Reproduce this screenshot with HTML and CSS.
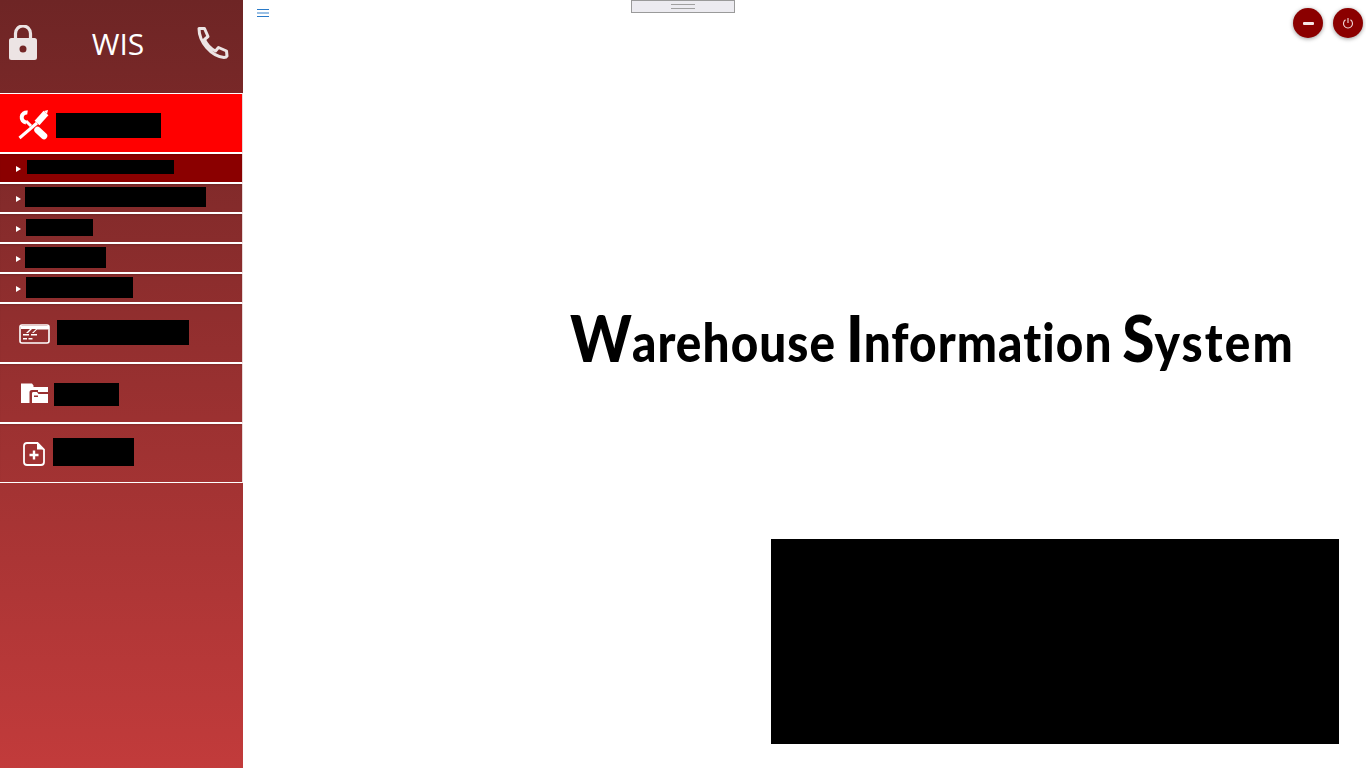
FILE: index.html
```html
<!DOCTYPE html>
<html lang="en">
<head>
    <meta charset="UTF-8">
    <meta name="viewport" content="width=device-width, initial-scale=1.0">
    <title>WIS</title>
    <link rel="stylesheet" href="styles.css">
</head>
<body>
    <aside class="sidebar">
        <header class="side-header">
            <svg class="head-icon" width="28" height="35" viewBox="0 0 28 35"><path d="M6.500 15V8.500a7.500 7.500 0 0 1 15 0V15" fill="none" stroke="#ece4e4" stroke-width="3.200"/><path fill-rule="evenodd" fill="#ece4e4" d="M2.500 13h23a2.500 2.500 0 0 1 2.500 2.500v17a2.500 2.500 0 0 1-2.500 2.500h-23A2.500 2.500 0 0 1 0 32.500v-17A2.500 2.500 0 0 1 2.500 13zM14 20.500a3.500 3.500 0 1 0 0 7 3.500 3.500 0 0 0 0-7z"/></svg>
            <span class="brand">WIS</span>
            <svg class="head-icon" width="32" height="32" viewBox="0 0 32 32"><path d="M2 1.500h5.500l3.500 8-3.500 3c2 4.500 6 9 11 11.500l3-3.500 8 3.500 .5 5c-.5 1-1.500 1.500-3 1.500C14 29 2 15 2 1.500z" fill="none" stroke="#ece4e4" stroke-width="3" stroke-linejoin="round"/></svg>
        </header>
        <nav class="menu">
            <a class="item item-active">
                <svg class="item-icon item-icon-tools" width="32" height="32" viewBox="0 0 32 32">
                    <path d="M29 4L20 14" stroke="#fff" stroke-width="6.500"/>
                    <path d="M31 1l-4 1 3 3z" fill="#fff"/>
                    <path d="M20 14L2.500 29" stroke="#fff" stroke-width="3"/>
                    <path d="M10.500 3.500A5 5 0 1 0 9 13.500" fill="none" stroke="#fff" stroke-width="4"/>
                    <path d="M9 12l5 5" stroke="#fff" stroke-width="3"/>
                    <path d="M20.500 21L27 27" stroke="#fff" stroke-width="6.500" stroke-linecap="round"/>
                </svg>
                <span class="redact redact-main" style="width:105px;height:25px"></span>
            </a>
            <a class="sub sub-active"><i class="arrow"></i><span class="redact" style="width:147px;height:14px;margin-left:6px"></span></a>
            <a class="sub"><i class="arrow"></i><span class="redact" style="width:181px;height:20px;margin-left:4px"></span></a>
            <a class="sub"><i class="arrow"></i><span class="redact" style="width:67px;height:17px;margin-left:5px"></span></a>
            <a class="sub"><i class="arrow"></i><span class="redact" style="width:81px;height:21px;margin-left:4px"></span></a>
            <a class="sub"><i class="arrow"></i><span class="redact" style="width:107px;height:21px;margin-left:5px"></span></a>
            <a class="item">
                <svg class="item-icon item-icon-card" width="32" height="20" viewBox="0 0 32 20"><rect x="1" y="1" width="29" height="18" rx="2" fill="none" stroke="#fff" stroke-width="1.600"/><path fill="#fff" d="M2 2h28v3H2zM7 9l4-4h2l-4 4zM13 9l4-4h12v.5H18l-3.500 3.500zM4 10h6v1.500H4zM12 10h6v1.500h-6zM4 14h4v1.500H4zM9.500 14h4v1.500h-4z"/></svg>
                <span class="redact redact-main" style="width:132px;height:25px;margin-left:6px"></span>
            </a>
            <a class="item item-folder">
                <svg class="item-icon item-icon-folder" width="28" height="22" viewBox="0 0 28 22"><path fill="#fff" d="M1 1.500h11l1.500 2V5H28v5H18V8h-6c-2 0-2.500 1-2.500 2.500V21H1z"/><path fill="#fff" d="M12 11.500c0-1 .5-1.500 1.500-1.500h3.500l1.500 2H28v9H12zM14 13.500v1.500h4v-1.500z"/></svg>
                <span class="redact redact-main" style="width:65px;height:23px;margin-left:6px"></span>
            </a>
            <a class="item">
                <svg class="item-icon item-icon-file" width="22" height="24" viewBox="0 0 22 24"><path d="M4 1h10.500l6.500 6.500V20c0 2-1 3-3 3H4c-2 0-3-1-3-3V4c0-2 1-3 3-3z" fill="none" stroke="#fff" stroke-width="1.800"/><path d="M14 1v6.500h7z" fill="#fff"/><path d="M11 8.500v9M6.500 13h9" stroke="#fff" stroke-width="2.400"/></svg>
                <span class="redact redact-main" style="width:81px;height:28px;margin-left:8px"></span>
            </a>
        </nav>
    </aside>
    <main class="content">
        <div class="topbar">
            <svg class="burger" width="12" height="8" viewBox="0 0 12 8"><path d="M0 .500h12M0 7.500h12" stroke="#2a7ac8" stroke-width="1"/><path d="M0 4h12" stroke="#6fa5da" stroke-width="1.400"/></svg>
            <div class="top-btns">
                <button class="round-btn"><span class="minus"></span></button>
                <button class="round-btn">
                    <svg width="12" height="12" viewBox="0 0 12 12"><path d="M3.500 2.800a4.500 4.500 0 1 0 5 0M6 1v5" fill="none" stroke="#f2dada" stroke-width="1.100"/></svg>
                </button>
            </div>
        </div>
        <h1 class="title"><span class="cap">W</span>arehouse <span class="cap">I</span>nformation <span class="cap">S</span><span class="last-word">ystem</span></h1>
        <div class="redact-block"></div>
    </main>
    <div class="splitter"><span class="grip"></span></div>
</body>
</html>
```

FILE: styles.css
```css
html, body {
    height: 100%;
}

body {
    display: flex;
    margin: 0;
    background-color: #fff;
    overflow: hidden;
    font-family: "Lato", "Liberation Sans", sans-serif;
}

.sidebar {
    width: 243px;
    flex-shrink: 0;
    background: linear-gradient(#6e2525, #c23b3b);
}

.side-header {
    height: 93px;
    display: flex;
    align-items: center;
    justify-content: space-between;
    padding: 0 14px 8px 9px;
    box-sizing: border-box;
}

.brand {
    color: #fff;
    font-family: "Open Sans", sans-serif;
    font-size: 30px;
    margin-top: 2px;
    margin-left: 2px;
}

.head-icon {
    display: block;
}

.menu {
    display: flex;
    flex-direction: column;
}

.item, .sub {
    display: flex;
    align-items: center;
    box-sizing: border-box;
    border-bottom: 2px solid #fff;
    border-right: 1px solid #e8d8d8;
    box-shadow: inset 0 2px 2px -1px rgba(0, 0, 0, 0.15);
}

.item {
    height: 60px;
    padding-left: 19px;
}

.item:last-child {
    height: 59px;
    border-bottom-width: 1px;
}

.item-active {
    height: 61px;
    padding-top: 4px;
    background-color: #f00;
    border-top: 1px solid #fff;
    box-shadow: none;
}

.sub {
    height: 30px;
    padding-left: 16px;
    padding-top: 1px;
}

.sub .redact {
    margin-top: -3px;
}

.sub-active {
    background-color: #8b0000;
}

.arrow {
    width: 0;
    height: 0;
    border-left: 5px solid #fff;
    border-top: 3px solid transparent;
    border-bottom: 3px solid transparent;
}

.redact {
    display: block;
    background-color: #000;
}

.redact-main {
    margin-left: 5px;
}

.item:not(.item-active) .redact-main {
    margin-top: -2px;
}

.item:last-child .redact-main {
    margin-top: -3px;
}

.item-folder:not(.item-active) .redact-main {
    margin-top: 2px;
}

.item-icon {
    display: block;
    flex-shrink: 0;
}

.item-icon-tools {
    margin-left: -2px;
    margin-right: 2px;
}

.item-icon-card {
    margin-top: 2px;
}

.item-icon-folder {
    margin-left: 1px;
}

.item-icon-file {
    margin-left: 4px;
    margin-top: 1px;
}

.content {
    flex: 1;
    display: flex;
    flex-direction: column;
    min-width: 0;
}

.topbar {
    display: flex;
    justify-content: space-between;
    align-items: flex-start;
    padding: 9px 3px 0 14px;
}

.burger {
    display: block;
}

.top-btns {
    display: flex;
    gap: 10px;
    margin-top: -1px;
}

.round-btn {
    width: 30px;
    height: 30px;
    padding: 0;
    border: 0;
    border-radius: 50%;
    background-color: #8b0000;
    box-shadow: 0 1px 4px rgba(0, 0, 0, 0.4);
    display: flex;
    align-items: center;
    justify-content: center;
}

.minus {
    width: 11px;
    height: 3px;
    border-radius: 1px;
    background-color: #f6e6e6;
}

.title {
    margin: 269px 0 0 327px;
    color: #000;
    font-size: 53px;
    font-weight: 900;
    line-height: 60px;
    letter-spacing: 1.2px;
    word-spacing: -3px;
    white-space: nowrap;
    font-variant-ligatures: none;
    transform: scaleX(0.9);
    transform-origin: left center;
}

.cap {
    font-size: 65px;
    letter-spacing: 0;
}

.last-word {
    letter-spacing: 2.4px;
}

.redact-block {
    width: 568px;
    height: 205px;
    margin: 167px 0 0 528px;
    background-color: #000;
}

.splitter {
    position: absolute;
    left: 631px;
    top: 0;
    width: 104px;
    height: 13px;
    box-sizing: border-box;
    background-color: #ecebf0;
    border: 1px solid #9a9a9a;
    display: flex;
    align-items: center;
    justify-content: center;
}

.grip {
    width: 24px;
    height: 3px;
    border-top: 1px solid #a0a0a0;
    border-bottom: 1px solid #a0a0a0;
}
```
